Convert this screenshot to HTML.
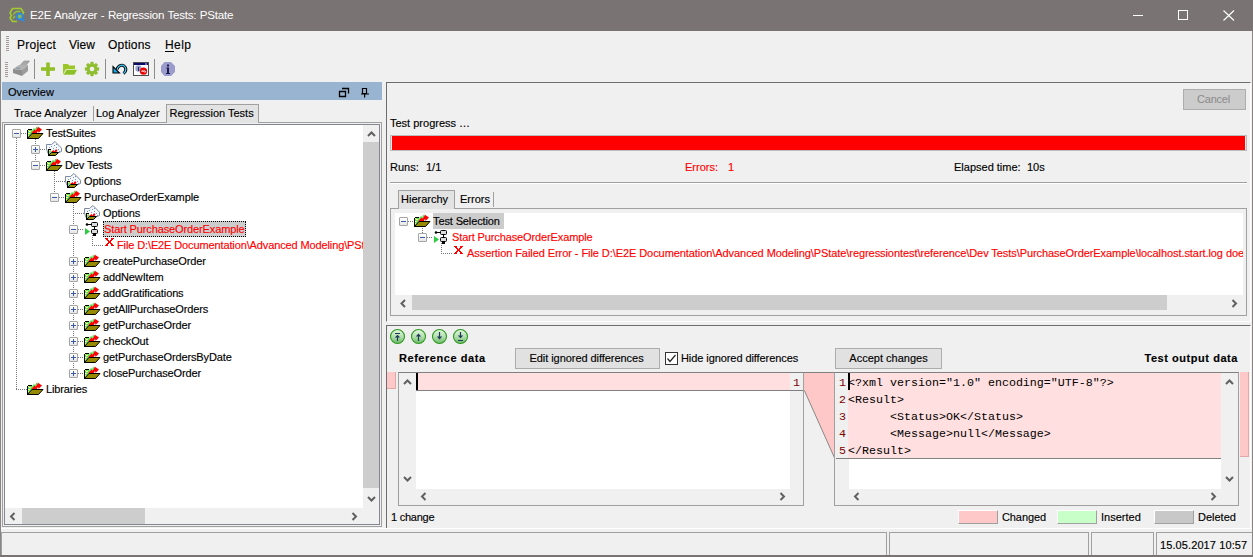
<!DOCTYPE html>
<html><head><meta charset="utf-8">
<style>
*{margin:0;padding:0;box-sizing:border-box}
html,body{width:1253px;height:557px;overflow:hidden;background:#f0f0f0}
body{position:relative;font-family:"Liberation Sans",sans-serif;font-size:11px;color:#000}
.a{position:absolute}
.t{position:absolute;white-space:nowrap;font-size:11px;line-height:16px;color:#000;-webkit-text-stroke:0.15px currentColor}
.red{color:#f00}
.bx{position:absolute;border:1px solid #a0a0a0}
.exp{position:absolute;width:9px;height:9px;border:1px solid #a5a5a5;border-radius:1px;background:linear-gradient(#fff,#e6e6e6)}
.exp:before{content:"";position:absolute;left:1px;top:3px;width:5px;height:1px;background:#3b5aa8}
.exp.p:after{content:"";position:absolute;left:3px;top:1px;width:1px;height:5px;background:#3b5aa8}
.dv{position:absolute;width:1px;background-image:linear-gradient(#777 50%,transparent 50%);background-size:1px 2px}
.dh{position:absolute;height:1px;background-image:linear-gradient(90deg,#777 50%,transparent 50%);background-size:2px 1px}
.mono{font-family:"Liberation Mono",monospace}
</style></head><body>
<svg width="0" height="0" style="position:absolute">
<defs>
<symbol id="icF" viewBox="0 0 18 16">
<path d="M1 4h4v1H1z M0 5h1v9H0z" fill="#000"/>
<path d="M1 5h4v4L1 13z" fill="#5fe070"/>
<path d="M1 5h1v1H1zM2 8h1v1H2zM1 10h1v1H1zM3 6h1v1H3z" fill="#ff0"/>
<path d="M2 6h1v1H2zM1 8h1v1H1z" fill="#fff"/>
<path d="M4.5 7.5L7 4 8 5.5 10 2" fill="none" stroke="#5ee85e" stroke-width="1.5"/>
<path d="M5 9L7.5 6 8.8 7.6 10.5 4.5 12 6" fill="none" stroke="#f00" stroke-width="2"/>
<path d="M10.5 1.5L15 4.5 11.5 8z" fill="#f00"/>
<path d="M0.5 13.5L5 8.5H16L11.5 13.5z" fill="#958a00" stroke="#000" stroke-width="1"/>
</symbol>
<symbol id="icO" viewBox="0 0 18 16">
<path d="M0.5 3.5L5.5 3.5 9 0.5 15.5 7.2V10.5L9.5 13 2 12.5 0.5 8z" fill="#f4f8ff" stroke="#7d8aa0" stroke-width="1"/>
<path d="M3 6h1v1H3zM5 5h1v1H5zM8 4h1v1H8zM10 3h1v1H10zM7 7h1v1H7zM10 6h1v1H10zM12 8h1v1H12zM9 9h1v1H9zM13 10h1v1H13z" fill="#8090b0"/>
<path d="M2 8h3v1H3v6H2z" fill="#000"/>
<path d="M3 9h2v5H3z" fill="#7ee07a"/>
<path d="M3 9h1v1H3zM4 12h1v1H4z" fill="#ff0"/>
<path d="M5 11L7.5 9 8.5 10.5 10 8 11.5 9.5 10 11.5z" fill="#f00"/>
<path d="M2.5 14.5L5.5 11.5H12.5L9.5 14.5z" fill="#958a00" stroke="#000" stroke-width="1"/>
</symbol>
<symbol id="icS" viewBox="0 0 18 16">
<path d="M1 7 L6 10.5 L1 14z" fill="#2ecc40"/>
<circle cx="3" cy="3.5" r="1.3" fill="#000"/>
<path d="M3 3.5h4" stroke="#000" stroke-width="1"/>
<rect x="7.5" y="1.5" width="6" height="4" rx="1" fill="#ddd" stroke="#000" stroke-width="1"/>
<path d="M10.5 6v2" stroke="#000" stroke-width="1"/>
<rect x="7.5" y="8.5" width="6" height="4" rx="1" fill="#ddd" stroke="#000" stroke-width="1"/>
<path d="M9 13h3v2H9z" fill="#000"/>
</symbol>
<symbol id="icX" viewBox="0 0 18 16">
<path d="M1 1h3v1H1zM7 1h3v1H7zM2 2h2v1H2zM7 2h2v1H7zM3 3h2v1H3zM6 3h2v1H6zM4 4h3v2H4zM3 6h2v1H3zM6 6h2v1H6zM2 7h2v1H2zM7 7h2v1H7zM1 8h3v1H1zM7 8h3v1H7z" fill="#f00"/>
</symbol>

<linearGradient id="gg" x1="0" y1="0" x2="0" y2="1"><stop offset="0" stop-color="#e4f6e0"/><stop offset="0.5" stop-color="#b4e0b0"/><stop offset="1" stop-color="#6cb868"/></linearGradient>
<symbol id="gbT" viewBox="0 0 17 17"><circle cx="8.5" cy="8.5" r="7" fill="url(#gg)" stroke="#2b9a1c" stroke-width="1.1"/><path d="M6 5.5h5M8.5 9V13" fill="none" stroke="#1f3a5a" stroke-width="1.2"/><path d="M5.8 9.6L8.5 6.8 11.2 9.6z" fill="#1f3a5a"/></symbol>
<symbol id="gbU" viewBox="0 0 17 17"><circle cx="8.5" cy="8.5" r="7" fill="url(#gg)" stroke="#2b9a1c" stroke-width="1.1"/><path d="M8.5 8V13" fill="none" stroke="#1f3a5a" stroke-width="1.2"/><path d="M5.8 8.6L8.5 5.5 11.2 8.6z" fill="#1f3a5a"/></symbol>
<symbol id="gbD" viewBox="0 0 17 17"><circle cx="8.5" cy="8.5" r="7" fill="url(#gg)" stroke="#2b9a1c" stroke-width="1.1"/><path d="M8.5 4V9" fill="none" stroke="#1f3a5a" stroke-width="1.2"/><path d="M5.8 8.4L8.5 11.5 11.2 8.4z" fill="#1f3a5a"/></symbol>
<symbol id="gbB" viewBox="0 0 17 17"><circle cx="8.5" cy="8.5" r="7" fill="url(#gg)" stroke="#2b9a1c" stroke-width="1.1"/><path d="M6 12.5h5M8.5 4V8" fill="none" stroke="#1f3a5a" stroke-width="1.2"/><path d="M5.8 7.4L8.5 10.2 11.2 7.4z" fill="#1f3a5a"/></symbol>
</defs></svg>


<!-- window border -->
<div class="a" style="left:0;top:0;width:1253px;height:557px;border:1px solid #8a8484;border-top:0"></div>
<!-- title bar -->
<div class="a" style="left:0;top:0;width:1253px;height:31px;background:#7a7373"></div>
<div class="t" style="left:30px;top:7px;font-size:11.6px;line-height:16px;color:#fff;letter-spacing:-0.25px;word-spacing:0.6px;-webkit-text-stroke:0">E2E Analyzer - Regression Tests: PState</div>
<!-- window controls -->
<div class="a" style="left:1133px;top:15px;width:10px;height:1px;background:#fff"></div>
<div class="a" style="left:1178px;top:10px;width:10px;height:10px;border:1px solid #fff"></div>
<svg class="a" style="left:1223px;top:10px" width="12" height="11"><path d="M0.5 0.5L11 10.5M11 0.5L0.5 10.5" stroke="#fff" stroke-width="1.1"/></svg>


<!-- title icon -->
<svg class="a" style="left:8px;top:7px" width="18" height="16">
<path d="M4.5 1.5H13L15.5 5.5L14 8M9 14.5H4.5L2 11 3.5 8.5 2 6 4.5 1.5" fill="none" stroke="#9fcc2e" stroke-width="1.6"/>
<path d="M5 7.5L8.5 4.5H12.5M5 11.5L7 9" fill="none" stroke="#8cc43a" stroke-width="1.4"/>
<circle cx="11.8" cy="9.6" r="2.9" fill="#8ab850" stroke="#2b8be0" stroke-width="1.8"/>
<path d="M13.8 11.8L16.3 14.3" stroke="#2b8be0" stroke-width="2.2"/>
</svg>
<!-- menu grip -->
<div class="a" style="left:6px;top:36px;width:3px;height:15px;background-image:linear-gradient(#a49898 50%,transparent 50%);background-size:3px 2px"></div>
<!-- toolbar -->
<div class="a" style="left:5px;top:62px;width:3px;height:15px;background-image:linear-gradient(#a49898 50%,transparent 50%);background-size:3px 2px"></div>
<svg class="a" style="left:12px;top:60px" width="18" height="17">
<path d="M7.5 6L12 1H17.5L13 6.5z" fill="#a9a9a9" stroke="#8a8a8a" stroke-width="0.6"/>
<path d="M1 9L7 5H16L10 10z" fill="#b2b2b2"/>
<path d="M1 9L10 10V16L1 13z" fill="#8e8e8e"/>
<path d="M10 10L16 5V11L10 16z" fill="#9c9c9c"/>
<path d="M4.5 8h1M6.5 8.5h1" stroke="#4a6aa8" stroke-width="0.9"/>
</svg>
<div class="a" style="left:34px;top:59px;width:1px;height:20px;background:#8c8c8c"></div>
<svg class="a" style="left:40px;top:61px" width="16" height="16">
<path d="M8 1.5V15M1 8H15" stroke="#90bf28" stroke-width="3.6"/>
</svg>
<svg class="a" style="left:62px;top:63px" width="16" height="13">
<path d="M1 1H6L7 2.5H13V6H4L1 11.5z" fill="#9cc628"/>
<path d="M1 12L4.5 6.5H15.5L12.5 12z" fill="#8cc02a" stroke="#eef6d8" stroke-width="0.6"/>
</svg>
<svg class="a" style="left:84px;top:61px" width="16" height="16">
<g fill="#8fbe30"><circle cx="8" cy="8" r="5.2"/>
<rect x="6.3" y="0.8" width="3.4" height="14.4" rx="1"/><rect x="0.8" y="6.3" width="14.4" height="3.4" rx="1"/>
<rect x="6.3" y="0.8" width="3.4" height="14.4" rx="1" transform="rotate(45 8 8)"/><rect x="6.3" y="0.8" width="3.4" height="14.4" rx="1" transform="rotate(-45 8 8)"/></g>
<circle cx="8" cy="8" r="2.3" fill="#f0f0f0"/>
</svg>
<div class="a" style="left:105px;top:59px;width:1px;height:20px;background:#8c8c8c"></div>
<svg class="a" style="left:112px;top:62px" width="16" height="14">
<path d="M5 7.5C6 3.5 11 1.5 13 5C14.5 7.5 13.5 10 11.5 11.5" fill="none" stroke="#000" stroke-width="3"/>
<path d="M5 7.5C6 3.5 11 1.5 13 5C14.5 7.5 13.5 10 11.5 11.5" fill="none" stroke="#3cc4f4" stroke-width="1.2"/>
<path d="M1 4.5V11H7.5z" fill="#1aa8e8" stroke="#000" stroke-width="1.1"/>
</svg>
<svg class="a" style="left:133px;top:62px" width="17" height="15">
<rect x="0.5" y="0.5" width="15" height="13" fill="#fff" stroke="#505050"/>
<rect x="1" y="1" width="14" height="2" fill="#0a0a6a"/>
<path d="M12 2h2" stroke="#d0d0e0"/>
<circle cx="5.5" cy="6.5" r="3.2" fill="#9ea4d0"/>
<path d="M5.5 5v4" stroke="#2a2a5a" stroke-width="1.2"/>
<circle cx="10.5" cy="9.2" r="3.6" fill="#e80000"/>
<path d="M8.5 9.2c1-1.2 1.5 0 2 0s1-1.2 2 0-1 1.2-2 0-1 1.2-2 0" fill="none" stroke="#fff" stroke-width="0.9"/>
</svg>
<div class="a" style="left:154px;top:59px;width:1px;height:20px;background:#8c8c8c"></div>
<svg class="a" style="left:160px;top:61px" width="16" height="16">
<path d="M4.5 1H11L15 5V11L11 15H4.5L1 11V5z" fill="#9c9ccc"/>
<path d="M7 3.5h2v2H7zM6.3 6.5H9V12H10V13H6V12H7V7.5H6.3z" fill="#1c1c50"/>
</svg>
<!-- menu -->
<div class="t" style="left:17px;top:37px;font-size:12px;letter-spacing:0.25px">Project</div>
<div class="t" style="left:69px;top:37px;font-size:12px">View</div>
<div class="t" style="left:108px;top:37px;font-size:12px;letter-spacing:0.2px">Options</div>
<div class="t" style="left:165px;top:37px;font-size:12px;letter-spacing:0.4px">Help</div>
<div class="a" style="left:165px;top:51px;width:9px;height:1px;background:#000"></div>

<!-- overview bar -->
<div class="a" style="left:2px;top:82px;width:380px;height:18px;background:#99b4d1"></div>
<div class="t" style="left:8px;top:84px">Overview</div>
<!-- overview bar icons -->
<svg class="a" style="left:338px;top:87px" width="12" height="11">
<path d="M1.5 4.5h6v5h-6z" fill="none" stroke="#000" stroke-width="1.3"/>
<path d="M4 1.5h6.5v5" fill="none" stroke="#000" stroke-width="1.3"/>
</svg>
<svg class="a" style="left:360px;top:87px" width="10" height="11">
<path d="M2.5 1.5h4v5h-4z" fill="none" stroke="#000" stroke-width="1.2"/>
<path d="M1 7h8M4.6 7V10.5" fill="none" stroke="#000" stroke-width="1.2"/>
</svg>



<!-- tabs -->
<div class="t" style="left:14px;top:105px">Trace Analyzer</div>
<div class="a" style="left:93px;top:106px;width:1px;height:15px;background:#a0a0a0"></div>
<div class="t" style="left:96px;top:105px">Log Analyzer</div>
<div class="a" style="left:166px;top:104px;width:93px;height:19px;background:#e3e3e3;border:1px solid #a0a0a0;border-bottom:0"></div>
<div class="t" style="left:169.5px;top:105px">Regression Tests</div>

<!-- tree box -->
<div class="a" style="left:2px;top:122px;width:380px;height:405px;border:1px solid #a0a0a0"></div>
<div class="a" style="left:2px;top:528px;width:380px;height:1px;background:#a0a0a0"></div>
<div class="a" style="left:4px;top:124px;width:376px;height:401px;border:1px solid #828790;background:#fff"></div>

<div class="a" style="left:5px;top:125px;width:358px;height:383px;overflow:hidden">
<div class="dv" style="left:11px;top:13px;height:252px"></div>
<div class="dv" style="left:30px;top:14px;height:27px"></div>
<div class="dv" style="left:49px;top:46px;height:27px"></div>
<div class="dv" style="left:68px;top:78px;height:171px"></div>
<div class="dv" style="left:87px;top:110px;height:11px"></div>
<div class="dh" style="left:16px;top:8px;width:6px"></div>
<div class="exp" style="left:7px;top:4px"></div>
<svg class="a" style="left:22px;top:0px" width="18" height="16"><use href="#icF"/></svg>
<div class="t" style="left:41px;top:0px;letter-spacing:-0.12px">TestSuites</div>
<div class="dh" style="left:35px;top:24px;width:6px"></div>
<div class="exp p" style="left:26px;top:20px"></div>
<svg class="a" style="left:41px;top:16px" width="18" height="16"><use href="#icO"/></svg>
<div class="t" style="left:60px;top:16px;letter-spacing:-0.12px">Options</div>
<div class="dh" style="left:35px;top:40px;width:6px"></div>
<div class="exp" style="left:26px;top:36px"></div>
<svg class="a" style="left:41px;top:32px" width="18" height="16"><use href="#icF"/></svg>
<div class="t" style="left:60px;top:32px;letter-spacing:-0.12px">Dev Tests</div>
<div class="dh" style="left:49px;top:56px;width:11px"></div>
<svg class="a" style="left:60px;top:48px" width="18" height="16"><use href="#icO"/></svg>
<div class="t" style="left:79px;top:48px;letter-spacing:-0.12px">Options</div>
<div class="dh" style="left:54px;top:72px;width:6px"></div>
<div class="exp" style="left:45px;top:68px"></div>
<svg class="a" style="left:60px;top:64px" width="18" height="16"><use href="#icF"/></svg>
<div class="t" style="left:79px;top:64px;letter-spacing:-0.12px">PurchaseOrderExample</div>
<div class="dh" style="left:68px;top:88px;width:11px"></div>
<svg class="a" style="left:79px;top:80px" width="18" height="16"><use href="#icO"/></svg>
<div class="t" style="left:98px;top:80px;letter-spacing:-0.12px">Options</div>
<div class="dh" style="left:73px;top:104px;width:6px"></div>
<div class="exp" style="left:64px;top:100px"></div>
<svg class="a" style="left:79px;top:96px" width="18" height="16"><use href="#icS"/></svg>
<div class="a" style="left:98px;top:96px;width:143px;height:16px;background:#cdcdcd;border:1px dotted #000"></div>
<div class="t red" style="left:99px;top:96px;letter-spacing:-0.12px">Start PurchaseOrderExample</div>
<div class="dh" style="left:87px;top:120px;width:12px"></div>
<svg class="a" style="left:99px;top:112px" width="18" height="16"><use href="#icX"/></svg>
<div class="t red" style="left:112px;top:112px;letter-spacing:-0.12px">File D:\E2E Documentation\Advanced Modeling\PState\regressiontest\reference\Dev Tests\PurchaseOrderExample\localhost.start.log does not exist</div>
<div class="dh" style="left:73px;top:136px;width:6px"></div>
<div class="exp p" style="left:64px;top:132px"></div>
<svg class="a" style="left:79px;top:128px" width="18" height="16"><use href="#icF"/></svg>
<div class="t" style="left:98px;top:128px;letter-spacing:-0.12px">createPurchaseOrder</div>
<div class="dh" style="left:73px;top:152px;width:6px"></div>
<div class="exp p" style="left:64px;top:148px"></div>
<svg class="a" style="left:79px;top:144px" width="18" height="16"><use href="#icF"/></svg>
<div class="t" style="left:98px;top:144px;letter-spacing:-0.12px">addNewItem</div>
<div class="dh" style="left:73px;top:168px;width:6px"></div>
<div class="exp p" style="left:64px;top:164px"></div>
<svg class="a" style="left:79px;top:160px" width="18" height="16"><use href="#icF"/></svg>
<div class="t" style="left:98px;top:160px;letter-spacing:-0.12px">addGratifications</div>
<div class="dh" style="left:73px;top:184px;width:6px"></div>
<div class="exp p" style="left:64px;top:180px"></div>
<svg class="a" style="left:79px;top:176px" width="18" height="16"><use href="#icF"/></svg>
<div class="t" style="left:98px;top:176px;letter-spacing:-0.12px">getAllPurchaseOrders</div>
<div class="dh" style="left:73px;top:200px;width:6px"></div>
<div class="exp p" style="left:64px;top:196px"></div>
<svg class="a" style="left:79px;top:192px" width="18" height="16"><use href="#icF"/></svg>
<div class="t" style="left:98px;top:192px;letter-spacing:-0.12px">getPurchaseOrder</div>
<div class="dh" style="left:73px;top:216px;width:6px"></div>
<div class="exp p" style="left:64px;top:212px"></div>
<svg class="a" style="left:79px;top:208px" width="18" height="16"><use href="#icF"/></svg>
<div class="t" style="left:98px;top:208px;letter-spacing:-0.12px">checkOut</div>
<div class="dh" style="left:73px;top:232px;width:6px"></div>
<div class="exp p" style="left:64px;top:228px"></div>
<svg class="a" style="left:79px;top:224px" width="18" height="16"><use href="#icF"/></svg>
<div class="t" style="left:98px;top:224px;letter-spacing:-0.12px">getPurchaseOrdersByDate</div>
<div class="dh" style="left:73px;top:248px;width:6px"></div>
<div class="exp p" style="left:64px;top:244px"></div>
<svg class="a" style="left:79px;top:240px" width="18" height="16"><use href="#icF"/></svg>
<div class="t" style="left:98px;top:240px;letter-spacing:-0.12px">closePurchaseOrder</div>
<div class="dh" style="left:11px;top:264px;width:11px"></div>
<svg class="a" style="left:22px;top:256px" width="18" height="16"><use href="#icF"/></svg>
<div class="t" style="left:41px;top:256px;letter-spacing:-0.12px">Libraries</div>
</div>


<div class="a" style="left:363px;top:125px;width:16px;height:399px;background:#f0f0f0"></div>
<div class="a" style="left:363px;top:142px;width:16px;height:346px;background:#cdcdcd"></div>
<div class="a" style="left:5px;top:508px;width:358px;height:16px;background:#f0f0f0"></div>
<div class="a" style="left:22px;top:508px;width:123px;height:16px;background:#cdcdcd"></div>
<svg class="a" style="left:366px;top:129px" width="11" height="10"><path d="M2 7L5.5 3.5 9 7" fill="none" stroke="#606060" stroke-width="2"/></svg>
<svg class="a" style="left:366px;top:494px" width="11" height="10"><path d="M2 3L5.5 6.5 9 3" fill="none" stroke="#606060" stroke-width="2"/></svg>
<svg class="a" style="left:8px;top:511px" width="10" height="11"><path d="M6.5 2L3 5.5 6.5 9" fill="none" stroke="#606060" stroke-width="2"/></svg>
<svg class="a" style="left:349px;top:511px" width="10" height="11"><path d="M3.5 2L7 5.5 3.5 9" fill="none" stroke="#606060" stroke-width="2"/></svg>

<div class="a" style="left:167px;top:122px;width:91px;height:1px;background:#e3e3e3"></div>
<!-- right panel top -->
<div class="a" style="left:386px;top:82px;width:865px;height:240px;border:1px solid #6d6d6d;border-right-color:#fff;border-bottom-color:#fff"></div>


<!-- top right content -->
<div class="a" style="left:1183px;top:89px;width:63px;height:21px;background:#cccccc;border:1px solid #adadad"></div>
<div class="t" style="left:1182px;top:91px;width:63px;text-align:center;color:#8a8a8a;-webkit-text-stroke:0;letter-spacing:-0.2px">Cancel</div>
<div class="t" style="left:390px;top:115px">Test progress &hellip;</div>
<div class="a" style="left:390px;top:135px;width:857px;height:16px;border:1px solid #bcbcbc;background:#e6e6e6"></div>
<div class="a" style="left:392px;top:136px;width:853px;height:14px;background:#f00"></div>
<div class="t" style="left:390px;top:159px">Runs:</div>
<div class="t" style="left:426px;top:159px">1/1</div>
<div class="t red" style="left:685px;top:159px">Errors:</div>
<div class="t red" style="left:728px;top:159px">1</div>
<div class="t" style="left:954px;top:159px">Elapsed time:</div>
<div class="t" style="left:1027px;top:159px">10s</div>
<div class="a" style="left:390px;top:182px;width:857px;height:1px;background:#a0a0a0"></div>
<div class="a" style="left:390px;top:183px;width:857px;height:1px;background:#fff"></div>
<!-- hierarchy tabs -->
<div class="a" style="left:390px;top:208px;width:857px;height:108px;border:1px solid #a0a0a0"></div>
<div class="a" style="left:398px;top:190px;width:57px;height:19px;background:#e3e3e3;border:1px solid #a0a0a0;border-bottom:0"></div>
<div class="a" style="left:399px;top:208px;width:55px;height:1px;background:#e3e3e3"></div>
<div class="t" style="left:401px;top:191px">Hierarchy</div>
<div class="t" style="left:460px;top:191px">Errors</div>
<div class="a" style="left:493px;top:192px;width:1px;height:15px;background:#a0a0a0"></div>
<div class="a" style="left:395px;top:213px;width:848px;height:82px;background:#fff;overflow:hidden">
  <div class="dv" style="left:27px;top:15px;height:5px"></div>
  <div class="dv" style="left:46px;top:24px;height:16px"></div>
  <div class="dh" style="left:13px;top:8px;width:6px"></div>
  <div class="dh" style="left:32px;top:24px;width:6px"></div>
  <div class="dh" style="left:46px;top:40px;width:12px"></div>
  <div class="exp" style="left:4px;top:4px"></div>
  <div class="exp" style="left:23px;top:20px"></div>
  <svg class="a" style="left:19px;top:0px" width="18" height="16"><use href="#icF"/></svg>
  <svg class="a" style="left:38px;top:16px" width="18" height="16"><use href="#icS"/></svg>
  <svg class="a" style="left:58px;top:32px" width="18" height="16"><use href="#icX"/></svg>
  <div class="a" style="left:38px;top:0px;width:71px;height:16px;background:#cccccc"></div>
  <div class="t" style="left:38px;top:0px;letter-spacing:-0.12px">Test Selection</div>
  <div class="t red" style="left:57px;top:16px;letter-spacing:-0.12px">Start PurchaseOrderExample</div>
  <div class="t red" style="left:72px;top:32px;letter-spacing:-0.07px">Assertion Failed Error - File D:\E2E Documentation\Advanced Modeling\PState\regressiontest\reference\Dev Tests\PurchaseOrderExample\localhost.start.log does not exist</div>
</div>
<div class="a" style="left:395px;top:295px;width:848px;height:16px;background:#f0f0f0"></div>
<div class="a" style="left:412px;top:295px;width:755px;height:15px;background:#cdcdcd"></div>
<svg class="a" style="left:399px;top:298px" width="10" height="10"><path d="M6 2L2.5 5.5 6 9" fill="none" stroke="#606060" stroke-width="2"/></svg>
<svg class="a" style="left:1229px;top:298px" width="10" height="10"><path d="M3.5 2L7 5.5 3.5 9" fill="none" stroke="#606060" stroke-width="2"/></svg>

<!-- right panel bottom -->
<div class="a" style="left:386px;top:325px;width:865px;height:204px;border:1px solid #6d6d6d;border-right-color:#fff;border-bottom-color:#fff"></div>


<!-- bottom right content -->
<svg class="a" style="left:389px;top:328px" width="17" height="17"><use href="#gbT"/></svg><svg class="a" style="left:410px;top:328px" width="17" height="17"><use href="#gbU"/></svg><svg class="a" style="left:431px;top:328px" width="17" height="17"><use href="#gbD"/></svg><svg class="a" style="left:452px;top:328px" width="17" height="17"><use href="#gbB"/></svg>
<div class="t" style="left:399px;top:350px;font-weight:bold;letter-spacing:0.55px">Reference data</div>
<div class="a" style="left:515px;top:348px;width:145px;height:21px;background:#e1e1e1;border:1px solid #adadad"></div>
<div class="t" style="left:514px;top:350px;width:145px;text-align:center;letter-spacing:-0.05px">Edit ignored differences</div>
<div class="a" style="left:665px;top:352px;width:13px;height:13px;background:#fff;border:1px solid #333"></div>
<svg class="a" style="left:665px;top:352px" width="13" height="13"><path d="M2.5 6.5L5 9.5 10.5 3" fill="none" stroke="#222" stroke-width="1.2"/></svg>
<div class="t" style="left:681px;top:350px;letter-spacing:-0.08px">Hide ignored differences</div>
<div class="a" style="left:835px;top:348px;width:107px;height:21px;background:#e1e1e1;border:1px solid #adadad"></div>
<div class="t" style="left:835px;top:350px;width:107px;text-align:center">Accept changes</div>
<div class="t" style="left:1000px;top:350px;width:238px;text-align:right;font-weight:bold;letter-spacing:0.55px">Test output data</div>

<!-- left markers -->
<div class="a" style="left:387px;top:372px;width:9px;height:17px;background:#ffc8c8;border-right:1px solid #e0a8a8;border-bottom:1px solid #e0a8a8"></div>
<div class="a" style="left:1240px;top:372px;width:9px;height:85px;background:#ffc8c8;border-right:1px solid #e0a8a8;border-bottom:1px solid #e0a8a8"></div>

<!-- left editor -->
<div class="a" style="left:398px;top:372px;width:406px;height:134px;border:1px solid #a0a0a0;border-top-color:#808080;background:#f0f0f0"></div>
<div class="a" style="left:416px;top:373px;width:374px;height:116px;background:#fff"></div>
<div class="a" style="left:416px;top:373px;width:374px;height:18px;background:#ffdfdf;border-bottom:1px solid #808080"></div>
<div class="a" style="left:790px;top:390px;width:13px;height:1px;background:#808080"></div>
<div class="a" style="left:416px;top:373px;width:2px;height:17px;background:#000"></div>
<div class="t mono" style="left:793px;top:375px;font-size:11.67px;line-height:17px;color:#800000;-webkit-text-stroke:0">1</div>
<svg class="a" style="left:402px;top:377px" width="11" height="10"><path d="M2 7L5.5 3.5 9 7" fill="none" stroke="#606060" stroke-width="2"/></svg>
<svg class="a" style="left:402px;top:474px" width="11" height="10"><path d="M2 3L5.5 6.5 9 3" fill="none" stroke="#606060" stroke-width="2"/></svg>
<svg class="a" style="left:419px;top:491px" width="10" height="11"><path d="M6.5 2L3 5.5 6.5 9" fill="none" stroke="#606060" stroke-width="2"/></svg>
<svg class="a" style="left:777px;top:491px" width="10" height="11"><path d="M3.5 2L7 5.5 3.5 9" fill="none" stroke="#606060" stroke-width="2"/></svg>

<!-- connector -->
<svg class="a" style="left:804px;top:372px" width="31" height="88"><path d="M0 0H31V87L0 18z" fill="#ffc8c8"/><path d="M0 0.5H31" stroke="#808080"/><path d="M0.3 18.3L30.5 85.8" stroke="#888" stroke-width="1" fill="none"/></svg>

<!-- right editor -->
<div class="a" style="left:834px;top:372px;width:405px;height:134px;border:1px solid #a0a0a0;border-top-color:#808080;background:#f0f0f0"></div>
<div class="a" style="left:849px;top:373px;width:372px;height:116px;background:#fff"></div>
<div class="a" style="left:836px;top:373px;width:385px;height:86px;background:#ffdfdf;border-bottom:1px solid #808080"></div>
<div class="a" style="left:836px;top:373px;width:12px;height:85px;background:#f0f0f0"></div>
<div class="a" style="left:848px;top:373px;width:2px;height:17px;background:#000"></div>
<div class="a mono" style="left:839px;top:375px;font-size:11.67px;line-height:17px;color:#800000;white-space:pre">1
2
3
4
5</div>
<div class="a mono" style="left:848px;top:375px;font-size:11.67px;line-height:17px;color:#000;white-space:pre">&lt;?xml version="1.0" encoding="UTF-8"?&gt;
&lt;Result&gt;
      &lt;Status&gt;OK&lt;/Status&gt;
      &lt;Message&gt;null&lt;/Message&gt;
&lt;/Result&gt;</div>
<svg class="a" style="left:1224px;top:377px" width="11" height="10"><path d="M2 7L5.5 3.5 9 7" fill="none" stroke="#606060" stroke-width="2"/></svg>
<svg class="a" style="left:1224px;top:474px" width="11" height="10"><path d="M2 3L5.5 6.5 9 3" fill="none" stroke="#606060" stroke-width="2"/></svg>
<svg class="a" style="left:852px;top:491px" width="10" height="11"><path d="M6.5 2L3 5.5 6.5 9" fill="none" stroke="#606060" stroke-width="2"/></svg>
<svg class="a" style="left:1208px;top:491px" width="10" height="11"><path d="M3.5 2L7 5.5 3.5 9" fill="none" stroke="#606060" stroke-width="2"/></svg>

<div class="t" style="left:391px;top:509px;letter-spacing:-0.25px">1 change</div>
<div class="a" style="left:958px;top:510px;width:40px;height:14px;background:#ffc8c8;border:1px solid #fff;border-right-color:#a0a0a0;border-bottom-color:#a0a0a0"></div>
<div class="t" style="left:1002px;top:509px;letter-spacing:-0.1px">Changed</div>
<div class="a" style="left:1057px;top:510px;width:40px;height:14px;background:#c8ffc8;border:1px solid #fff;border-right-color:#a0a0a0;border-bottom-color:#a0a0a0"></div>
<div class="t" style="left:1101px;top:509px">Inserted</div>
<div class="a" style="left:1154px;top:510px;width:40px;height:14px;background:#c8c8c8;border:1px solid #fff;border-right-color:#a0a0a0;border-bottom-color:#a0a0a0"></div>
<div class="t" style="left:1198px;top:509px">Deleted</div>

<!-- status bar -->
<div class="a" style="left:1px;top:528px;width:1251px;height:1px;background:#fff"></div>
<div class="a" style="left:1px;top:532px;width:886px;height:24px;border:1px solid #a0a0a0;border-bottom:0"></div>
<div class="a" style="left:889px;top:532px;width:200px;height:24px;border:1px solid #a0a0a0;border-bottom:0"></div>
<div class="a" style="left:1091px;top:532px;width:63px;height:24px;border:1px solid #a0a0a0;border-bottom:0"></div>
<div class="a" style="left:1156px;top:532px;width:96px;height:23px;border:1px solid #a0a0a0;border-bottom:0;border-right:0"></div>
<div class="t" style="left:1160px;top:537px;letter-spacing:0.1px">15.05.2017 10:57</div>
<div class="a" style="left:0;top:555px;width:1253px;height:2px;background:#7a7373"></div>

</body></html>
